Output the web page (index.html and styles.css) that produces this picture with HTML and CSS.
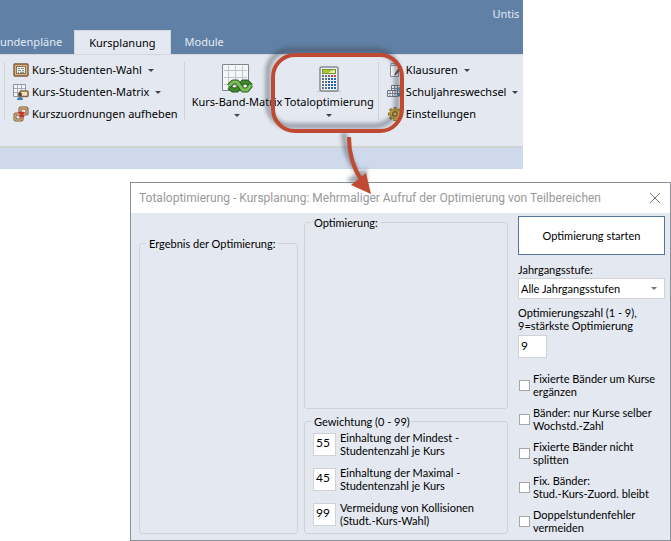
FILE: index.html
```html
<!DOCTYPE html>
<html lang="de">
<head>
    <meta charset="UTF-8">
    <meta name="viewport" content="width=device-width, initial-scale=1.0">
    <title>Untis - Totaloptimierung</title>
    <link rel="stylesheet" href="styles.css">
</head>
<body>
    <div class="app">
        <header class="titlebar">
            <div class="app-name">Untis</div>
            <nav class="tabs">
                <button class="tab tab-first">undenpläne</button>
                <button class="tab active">Kursplanung</button>
                <button class="tab">Module</button>
            </nav>
        </header>

        <div class="ribbon">
            <div class="group">
                <button class="item">
                    <svg width="16" height="16" viewBox="0 0 16 16">
                        <rect x="1" y="2" width="14" height="12" rx="1" fill="#d9b583" stroke="#7c5b3c" stroke-width="1.4"/>
                        <rect x="3.5" y="4.5" width="9" height="7" fill="#eef4ee" stroke="#947050"/>
                        <path d="M5 6.5h2m1 0h3M5 8.5h3m1 0h2M5 10.3h1m1 0h4" stroke="#5d7f7b" stroke-width=".9"/>
                    </svg>
                    Kurs-Studenten-Wahl <span class="arrow"></span>
                </button>
                <button class="item">
                    <svg width="16" height="16" viewBox="0 0 16 16">
                        <path d="M.5.5h12v12H.5z" fill="#f4f6f9" stroke="#8d949e"/>
                        <path d="M4.5 1v11M8.5 1v11M1 4.500h11M1 8.500h11" stroke="#a5acb5"/>
                        <rect x="7" y="7" width="8" height="5.500" rx="1" fill="#f0dfc4" stroke="#8b643d" stroke-width="1.6"/>
                        <circle cx="7" cy="10.500" r="2" fill="#594232"/>
                        <path d="M4 16q0-3 3-3t3 3z" fill="#3e7fb5"/>
                    </svg>
                    Kurs-Studenten-Matrix <span class="arrow"></span>
                </button>
                <button class="item">
                    <svg width="16" height="16" viewBox="0 0 16 16">
                        <rect x="7" y="2" width="7" height="6" rx="1" fill="#e8edf3" stroke="#6e4e31" stroke-width="3"/>
                        <rect x="7" y="2" width="7" height="6" rx="1" fill="none" stroke="#d6ae78" stroke-width="1.400"/>
                        <rect x="2" y="8" width="7" height="6" rx="1" fill="#e8edf3" stroke="#6e4e31" stroke-width="3"/>
                        <rect x="2" y="8" width="7" height="6" rx="1" fill="none" stroke="#d6ae78" stroke-width="1.400"/>
                        <path d="M6 6l5 5M11 6l-5 5M8.500 5.500v6" stroke="#d12a2a" stroke-width="1.500"/>
                    </svg>
                    Kurszuordnungen aufheben
                </button>
            </div>

            <div class="group group-big">
                <button class="big">
                    <svg width="32" height="32" viewBox="0 0 32 32">
                        <path d="M1.500 2.500h26v26h-26z" fill="#f5f6f8" stroke="#80858c"/>
                        <path d="M7.500 4v23M14.500 4v23M21.500 4v23M3 8.500h23M3 15.500h23M3 22.500h23" stroke="#c1c5ca"/>
                        <g fill="none" stroke-linejoin="round">
                            <path d="M8 25l4 3h4l6-8h4l4 4" stroke="#285c1d" stroke-width="5"/>
                            <path d="M8 25l4 3h4l6-8h4l4 4" stroke="#418a2c" stroke-width="3"/>
                            <path d="M8 24l4-4h4l6 8h4l4-5" stroke="#285c1d" stroke-width="5"/>
                            <path d="M8 24l4-4h4l6 8h4l4-5" stroke="#7dbd59" stroke-width="3"/>
                        </g>
                    </svg>
                    <span>Kurs-Band-Matrix</span>
                    <span class="arrow"></span>
                </button>
                <button class="big">
                    <svg width="32" height="32" viewBox="0 0 32 32">
                        <path d="M4 29.500h24" stroke="#c3c7ce"/>
                        <rect x="7" y="5" width="18" height="24" rx="1.500" fill="#f1f4f7" stroke="#868b92" stroke-width="1.500"/>
                        <rect x="9.500" y="7.500" width="13" height="4" fill="#a9c93f" stroke="#789128"/>
                        <path d="M15 11l5-3h2v3z" fill="#e6efaa"/>
                        <path d="M9 14h5M9 17h5M9 20h5M9 23h5M9 26h5" stroke="#6b7078" stroke-width="2" stroke-dasharray="2 1"/>
                        <path d="M15 17h8M15 20h8M15 23h8M15 26h8" stroke="#2463b4" stroke-width="2" stroke-dasharray="2 1"/>
                        <path d="M15 14h2" stroke="#6b7078" stroke-width="2"/>
                        <path d="M18 14h5" stroke="#d8404a" stroke-width="2" stroke-dasharray="2 1"/>
                    </svg>
                    <span>Totaloptimierung</span>
                    <span class="arrow"></span>
                </button>
            </div>

            <div class="group group-last">
                <button class="item">
                    <svg width="16" height="16" viewBox="0 0 16 16">
                        <path d="M3.500 3.500h8v11h-8z" fill="#fff" stroke="#8b9096"/>
                        <path d="M4 3V1.500h4V3" fill="#eef0f3" stroke="#8b9096"/>
                        <path d="M7 14l1-3 5-7 2 1-5 7z" fill="#54585d"/>
                    </svg>
                    Klausuren <span class="arrow"></span>
                </button>
                <button class="item">
                    <svg width="16" height="16" viewBox="0 0 16 16">
                        <path d="M4.500 1.500h10v8h-10z" fill="#fff" stroke="#6d7681"/>
                        <path d="M7.500 2v7M10.500 2v7M5 4.500h9M5 7h9" stroke="#7d8792"/>
                        <path d="M.5 6.500h10v6H.5z" fill="#fff" stroke="#6d7681"/>
                        <path d="M3 7v5M5.500 7v5M8 7v5M1 9.500h9" stroke="#7d8792"/>
                        <path d="M11 12q4-2 2-7" fill="none" stroke="#2f80b0" stroke-width="2.500"/>
                        <path d="M9 5l5-3 1 5z" fill="#4b9ac6"/>
                    </svg>
                    Schuljahreswechsel <span class="arrow"></span>
                </button>
                <button class="item">
                    <svg width="16" height="16" viewBox="0 0 16 16">
                        <path d="M8 1v14M1 8h14M3 3l10 10M13 3L3 13" stroke="#8f6c20" stroke-width="3"/>
                        <path d="M8 2v12M2 8h12M4 4l8 8M12 4l-8 8" stroke="#d6a937" stroke-width="2"/>
                        <circle cx="8" cy="8" r="4.800" fill="#dcb140" stroke="#b88a28"/>
                        <circle cx="8" cy="8" r="2.500" fill="#c4952e" stroke="#765717"/>
                        <circle cx="8" cy="8" r="1" fill="#f4eed8"/>
                    </svg>
                    Einstellungen
                </button>
            </div>
        </div>
        <div class="workspace"></div>

        <!-- marks the ribbon button that opens the dialog -->
        <svg class="callout" width="160" height="160" viewBox="0 0 160 160">
            <defs>
                <filter id="soft" x="-20%" y="-20%" width="140%" height="140%">
                    <feGaussianBlur stdDeviation="2"/>
                </filter>
            </defs>
            <g filter="url(#soft)" opacity=".5" transform="translate(-5 -5)">
                <rect x="13" y="15" width="129" height="76" rx="22" fill="none" stroke="#3c4652" stroke-width="5"/>
                <path d="M89 97q0 22 15 42" fill="none" stroke="#3c4652" stroke-width="5"/>
                <path d="M91 145l21-12-1 20z" fill="#3c4652"/>
            </g>
            <rect x="13" y="15" width="129" height="76" rx="22" fill="none" stroke="#bf4a31" stroke-width="4"/>
            <path d="M89 97q0 25 13 44" fill="none" stroke="#bf4a31" stroke-width="4"/>
            <path d="M91 145l15-12 5 21z" fill="#bf4a31"/>
        </svg>
    </div>

    <form class="dialog">
        <div class="dialog-title">
            <span>Totaloptimierung - Kursplanung: Mehrmaliger Aufruf der Optimierung von Teilbereichen</span>
            <button type="button" class="close" aria-label="Schließen">
                <svg width="10" height="10" viewBox="0 0 10 10"><path d="M0 0l10 10M10 0L0 10" stroke="#777"/></svg>
            </button>
        </div>

        <div class="dialog-body">
            <fieldset class="box result">
                <legend>Ergebnis der Optimierung:</legend>
            </fieldset>

            <div class="middle">
                <fieldset class="box optimize">
                    <legend>Optimierung:</legend>
                </fieldset>
                <fieldset class="box weights">
                    <legend>Gewichtung (0 - 99)</legend>
                    <div class="weight">
                        <input type="text" class="num" id="min" value="55">
                        <label for="min">Einhaltung der Mindest -<br>Studentenzahl je Kurs</label>
                    </div>
                    <div class="weight">
                        <input type="text" class="num" id="max" value="45">
                        <label for="max">Einhaltung der Maximal -<br>Studentenzahl je Kurs</label>
                    </div>
                    <div class="weight">
                        <input type="text" class="num" id="collisions" value="99">
                        <label for="collisions">Vermeidung von Kollisionen<br>(Studt.-Kurs-Wahl)</label>
                    </div>
                </fieldset>
            </div>

            <div class="options">
                <button type="button" class="start">Optimierung starten</button>
                <label for="grade">Jahrgangsstufe:</label>
                <div class="select">
                    <select id="grade">
                        <option>Alle Jahrgangsstufen</option>
                    </select>
                    <span class="arrow"></span>
                </div>
                <label for="level">Optimierungszahl (1 - 9),<br>9=stärkste Optimierung</label>
                <input type="text" class="num num-wide" id="level" value="9">
                <div class="checks">
                    <label class="check"><input type="checkbox"><span>Fixierte Bänder um Kurse<br>ergänzen</span></label>
                    <label class="check"><input type="checkbox"><span>Bänder: nur Kurse selber<br>Wochstd.-Zahl</span></label>
                    <label class="check"><input type="checkbox"><span>Fixierte Bänder nicht<br>splitten</span></label>
                    <label class="check"><input type="checkbox"><span>Fix. Bänder:<br>Stud.-Kurs-Zuord. bleibt</span></label>
                    <label class="check"><input type="checkbox"><span>Doppelstundenfehler<br>vermeiden</span></label>
                </div>
            </div>
        </div>
    </form>
</body>
</html>
```
FILE: styles.css
```css
* {
    box-sizing: border-box;
}
body {
    margin: 0;
    background: #fff;
    color: #000;
    font-family: Lato, Arial, sans-serif;
    font-size: 11px;
    line-height: 13px;
}
button, input, select {
    font: inherit;
    color: inherit;
    margin: 0;
    padding: 0;
}
button {
    border: none;
    background: none;
    white-space: nowrap;
}
svg {
    flex: none;
}

/* main window */
.app {
    position: relative;
    width: 78%;
    font-family: "Noto Sans", "Segoe UI", sans-serif;
    line-height: 16px;
}
.titlebar {
    background: #6080a6;
    color: #e4ebf4;
}
.app-name {
    padding: 6px 4px 8px;
    text-align: right;
}
.tabs {
    display: flex;
}
.tab {
    height: 24px;
    padding: 0 14px;
}
.tab-first {
    padding: 0 12px 0 0;
}
.tab.active {
    background: #e4e9f1;
    color: #000;
    border: 1px solid #d3d6da;
    border-bottom: none;
}
.ribbon {
    display: flex;
    height: 92px;
    padding: 7px 4px 26px;
    background: #e4e9f1;
    border-top: 1px solid #d3d6da;
}
.group {
    display: flex;
    flex-direction: column;
    gap: 6px;
    padding: 0 6px 0 8px;
    border-left: 1px solid #d0d3d8;
}
.group-big {
    flex-direction: row;
    gap: 2px;
    padding: 0 4px 0 7px;
}
.item {
    display: flex;
    align-items: center;
    gap: 3px;
    height: 16px;
}
.big {
    display: flex;
    flex-direction: column;
    align-items: center;
    height: 57px;
}
.arrow {
    border: 3px solid transparent;
    border-top-color: #444;
    border-bottom: none;
}
.item .arrow {
    margin-left: 3px;
}
.big .arrow {
    margin-top: 4px;
}
.workspace {
    height: 23px;
    background: #cedaec;
    border-top: 2px solid #d3d3d3;
}
.callout {
    position: absolute;
    left: 260px;
    top: 40px;
    z-index: 2;
}

/* dialog */
.dialog {
    margin: 13px 0 0 130px;
    border: 1px solid #8c9199;
    background: #e4e9f1;
}
.dialog-title {
    display: flex;
    align-items: center;
    justify-content: space-between;
    height: 30px;
    padding: 0 10px 0 8px;
    background: #fff;
    color: #999;
    font-family: Roboto, "Segoe UI", sans-serif;
    font-size: 12px;
    white-space: nowrap;
}
.close {
    display: flex;
}
.dialog-body {
    display: grid;
    grid-template-columns: 159fr 204fr 151fr;
    column-gap: 6px;
    padding: 3px 5px 6px 8px;
}
.box {
    min-width: 0;
    margin: 0;
    padding: 0 6px;
    border: 1px solid #d0d2d5;
    border-radius: 3px;
}
.box legend {
    padding: 0 3px;
}
.result {
    margin-top: 21px;
}
.middle {
    display: flex;
    flex-direction: column;
    gap: 6px;
}
.optimize {
    flex: 1;
}
.weights {
    padding: 3px 8px 6px;
}
.weights legend {
    padding: 0 1px;
}
.weight {
    display: flex;
    align-items: center;
    gap: 4px;
    height: 26px;
}
.weight + .weight {
    margin-top: 9px;
}
.num {
    width: 23px;
    height: 23px;
    padding: 0 2px 3px;
    border: 1px solid #d0d2d5;
    background: #fff;
    font-size: 12px;
}
.num-wide {
    width: 29px;
    margin-top: 3px;
}
.options {
    display: flex;
    flex-direction: column;
    align-items: flex-start;
    padding-left: 4px;
}
.start {
    width: 100%;
    height: 39px;
    margin-bottom: 8px;
    border: 1px solid #54759f;
    background: #fff;
}
.select {
    display: flex;
    align-items: center;
    width: 100%;
    height: 21px;
    margin: 2px 0 7px;
    padding-right: 7px;
    border: 1px solid #d0d2d5;
    background: #fff;
}
.select select {
    flex: 1;
    min-width: 0;
    padding-left: 2px;
    border: none;
    background: none;
    appearance: none;
}
.select .arrow {
    border-top-color: #777;
}
.checks {
    display: flex;
    flex-direction: column;
    gap: 8px;
    margin-top: 14px;
}
.check {
    display: flex;
    align-items: center;
    gap: 3px;
    padding-left: 1px;
    white-space: nowrap;
}
.check input {
    appearance: none;
    width: 11px;
    height: 11px;
    border: 1px solid #a5a7aa;
    background: #fff;
}
```
